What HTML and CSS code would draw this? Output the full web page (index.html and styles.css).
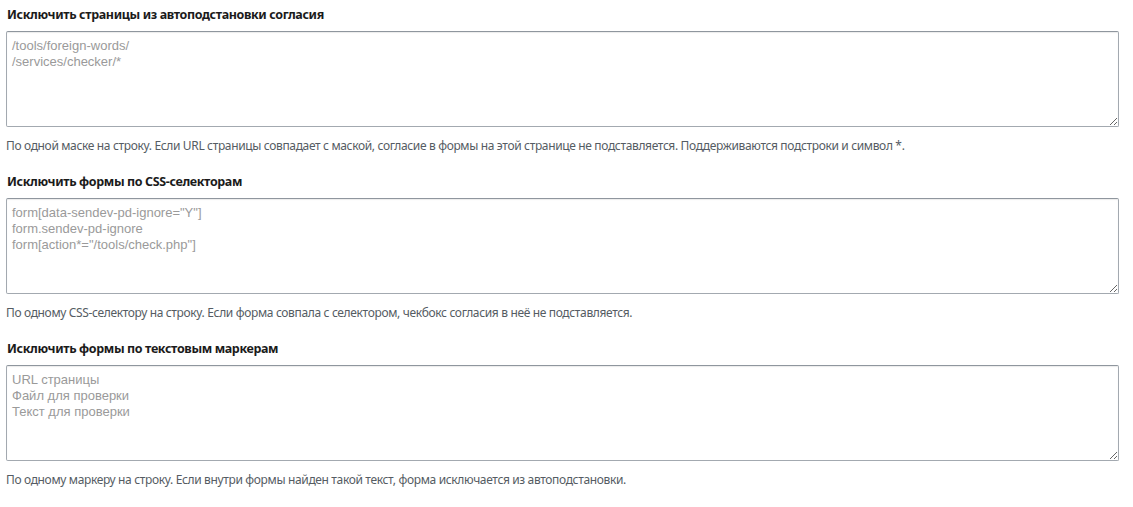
FILE: index.html
```html
<!DOCTYPE html>
<html lang="ru">
<head>
<meta charset="utf-8">
<link rel="stylesheet" href="styles.css">
</head>
<body>
<div class="page">
  <div class="field">
    <label class="label">Исключить страницы из автоподстановки согласия</label>
    <textarea class="area" placeholder="/tools/foreign-words/
/services/checker/*"></textarea>
    <div class="hint">По одной маске на строку. Если URL страницы совпадает с маской, согласие в формы на этой странице не подставляется. Поддерживаются подстроки и символ *.</div>
  </div>
  <div class="field">
    <label class="label">Исключить формы по CSS-селекторам</label>
    <textarea class="area" placeholder="form[data-sendev-pd-ignore=&quot;Y&quot;]
form.sendev-pd-ignore
form[action*=&quot;/tools/check.php&quot;]"></textarea>
    <div class="hint">По одному CSS-селектору на строку. Если форма совпала с селектором, чекбокс согласия в неё не подставляется.</div>
  </div>
  <div class="field">
    <label class="label">Исключить формы по текстовым маркерам</label>
    <textarea class="area" placeholder="URL страницы
Файл для проверки
Текст для проверки"></textarea>
    <div class="hint">По одному маркеру на строку. Если внутри формы найден такой текст, форма исключается из автоподстановки.</div>
  </div>
</div>
</body>
</html>
```
FILE: styles.css
```css
html, body {
  margin: 0;
  padding: 0;
  background: #ffffff;
}
.page {
  padding: 7px 14px 0 6px;
  display: flex;
  flex-direction: column;
  gap: 20px;
}
.field {
  display: flex;
  flex-direction: column;
}
.label {
  font-family: "Noto Sans", "Open Sans", sans-serif;
  font-weight: bold;
  font-size: 12.5px;
  letter-spacing: -0.37px;
  line-height: 16px;
  color: #1b1b1b;
  padding-left: 1px;
  margin-bottom: 8px;
}
.area {
  box-sizing: border-box;
  width: 100%;
  height: 96px;
  margin: 0;
  padding: 6px 5px 5px;
  border: 1px solid #a3a9b0;
  border-top-color: #8f969e;
  border-radius: 2px;
  box-shadow: inset 0 1px 1px rgba(0,0,0,0.08);
  font-family: "Liberation Sans", Arial, sans-serif;
  font-size: 13px;
  line-height: 16px;
  color: #333;
  background: #fff;
  resize: vertical;
}
.area::placeholder {
  color: #9a9a9a;
}
.hint {
  font-family: "Noto Sans", "Open Sans", sans-serif;
  font-size: 12px;
  letter-spacing: -0.35px;
  line-height: 16px;
  color: #555c63;
  margin-top: 11px;
}
```
